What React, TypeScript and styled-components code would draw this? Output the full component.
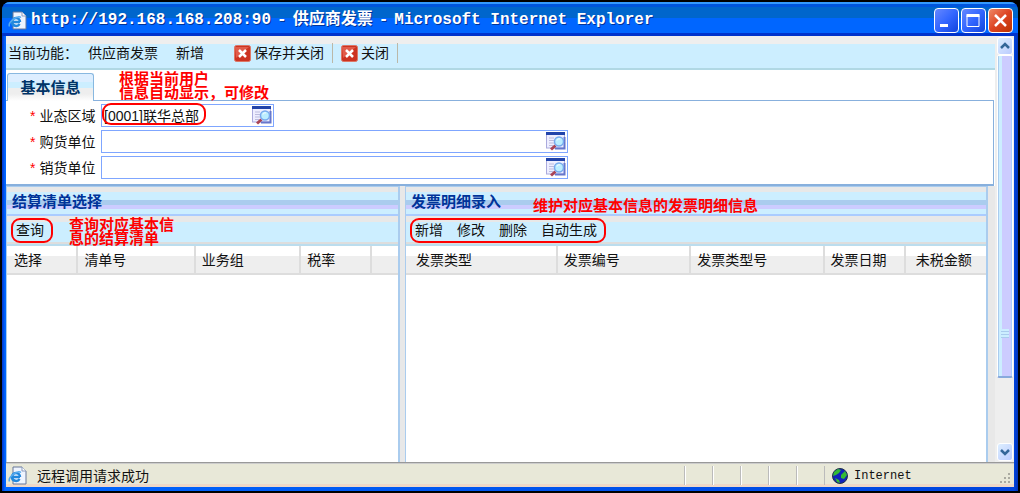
import React from "react";
import styled, { createGlobalStyle, css } from "styled-components";

const Global = createGlobalStyle`
  *, *::before, *::after { box-sizing: border-box; }
  html, body { margin: 0; background: #000; }
  body { font: 14px/20px "Liberation Sans", "Noto Sans CJK SC", sans-serif; color: #111; }
  button { font: inherit; color: inherit; border: 0; padding: 0; background: none; cursor: pointer; white-space: nowrap; }
`;

const Frame = styled.div`
  min-height: 100vh;
  display: flex;
  padding: 2px;
  background: #000;
`;

const Window = styled.div`
  flex: 1;
  min-width: 0;
  display: flex;
  flex-direction: column;
  padding: 0 4px 4px;
  border-radius: 8px 8px 0 0;
  background: linear-gradient(90deg, #0033cc 0, #0066ff 3px, #0066ff 4px, #0044dd calc(100% - 4px), #0033bb 100%);
`;

const TitleBar = styled.header`
  height: 34px;
  margin: 0 -4px;
  padding: 2px 5px 0 6px;
  display: flex;
  align-items: center;
  border-radius: 8px 8px 0 0;
  background: linear-gradient(#3399ff 0 2px, #0055dd 2px 5px, #0066cc 5px 16px, #0066ff 16px 31px, #0033cc 31px);
`;

const Title = styled.h1`
  flex: 1;
  min-width: 0;
  margin: 0 0 0 4px;
  display: flex;
  gap: 6px;
  white-space: nowrap;
  overflow: hidden;
  font: bold 16px/20px "Liberation Mono", "Noto Sans CJK SC", monospace;
  color: #fff;
  text-shadow: 1px 1px 0 #003399;
`;

const WindowButtons = styled.div`
  display: flex;
  gap: 2px;
`;

const WindowButton = styled.button<{ $close?: boolean }>`
  width: 25px;
  height: 25px;
  border: 1px solid #fff;
  border-radius: 4px;
  background: ${(p) => (p.$close ? "linear-gradient(135deg, #ee8866, #dd4422 50%, #bb3300)" : "linear-gradient(135deg, #6688ff, #3366ff 50%, #1144dd)")};
  svg { display: block; }
`;

const Client = styled.div`
  flex: 1;
  display: flex;
  background: #fff;
`;

const Page = styled.main`
  flex: 1;
  min-width: 0;
  display: flex;
  flex-direction: column;
`;

const Toolbar = styled.div`
  height: 34px;
  padding: 2px 2px 0;
  display: flex;
  align-items: center;
  background: linear-gradient(#eee 0 8px, #cef 8px);
  border-bottom: 2px solid #b0d8e4;
  white-space: nowrap;
`;

const Crumb = styled.span<{ $wide?: boolean }>`
  margin-right: ${(p) => (p.$wide ? 30 : 18)}px;
  &:first-child { margin-right: 10px; }
`;

const ToolButton = styled.button`
  display: flex;
  align-items: center;
  gap: 3px;
  height: 20px;
  padding-right: 8px;
  margin-right: 8px;
  border-right: 1px solid #bbb8a8;
`;

const TabBar = styled.div`
  position: relative;
  height: 30px;
  padding: 3px 0 0 1px;
  display: flex;
  align-items: stretch;
`;

const Tab = styled.button`
  position: relative;
  z-index: 1;
  width: 87px;
  margin-bottom: -1px;
  border: 1px solid #88b8e0;
  border-bottom: 0;
  border-radius: 3px 3px 0 0;
  background: linear-gradient(#def 0 8px, #cef 8px 14px, #eee 14px 20px, #fff);
  font-weight: bold;
  font-size: 15px;
  color: #003366;
`;

const BasicForm = styled.form`
  border: 1px solid #88b0dd;
  border-left: 0;
  border-bottom-width: 2px;
  padding: 3px 0 5px 24px;
  margin-right: 1px;
  display: flex;
  flex-direction: column;
  gap: 3px;
`;

const Field = styled.div<{ $short?: boolean }>`
  display: flex;
  align-items: center;
  label { width: 71px; white-space: nowrap; line-height: 22px; }
  label i { color: #f00; font-style: normal; margin-right: 4px; }
  > div {
    width: ${(p) => (p.$short ? 173 : 467)}px;
    height: 23px;
    padding: 0 1px 0 2px;
    display: flex;
    align-items: center;
    border: 1px solid #7fa6ff;
  }
  input { flex: 1; min-width: 0; border: 0; padding: 0; outline: 0; font: inherit; color: inherit; background: none; }
  svg { display: block; }
`;

const Panels = styled.div`
  flex: 1;
  display: grid;
  grid-template-columns: minmax(0, 394fr) minmax(0, 583fr);
  gap: 5px;
  padding-right: 7px;
  background: #e8e8e8;
`;

const Panel = styled.section`
  display: flex;
  flex-direction: column;
  background: #fff;
  border: 1px solid #aaccee;
  border-width: 1px 2px 0 1px;
`;

const PanelTitle = styled.h2`
  margin: 0;
  height: 29px;
  padding: 0 5px;
  font-size: 15px;
  line-height: 29px;
  color: #003399;
  background: linear-gradient(#e8e8e8 0 5px, #cef 5px 13px, #aaccee 13px 18px, #ccccff 18px 22px, #cef 22px);
  border-bottom: 2px solid #aaccff;
`;

const PanelTools = styled.div`
  height: 30px;
  padding: 0 9px 2px;
  display: flex;
  align-items: center;
  gap: 14px;
  background: linear-gradient(#e8e8e8 0 6px, #cef 6px 26px, #ddd 26px 28px, #bde 28px);
`;

const Grid = styled.table<{ $indent: number }>`
  width: 100%;
  table-layout: fixed;
  border-collapse: collapse;
  th {
    height: 28px;
    padding: 0 6px;
    text-align: left;
    font-weight: normal;
    white-space: nowrap;
    overflow: hidden;
    background: linear-gradient(#fff 0 10px, #eee 10px);
    border-right: 2px solid #ddd;
    border-bottom: 2px solid #ddd;
  }
  th:first-child, th:last-child { padding-left: ${(p) => p.$indent}px; }
  th:last-child { border-right: 0; }
`;

const ScrollTrack = styled.div`
  width: 19px;
  padding: 1px 1px 1px 2px;
  display: flex;
  flex-direction: column;
  background: #eee;
`;

const ScrollButton = styled.button`
  height: 18px;
  border: 1px solid #fff;
  border-radius: 3px;
  background: linear-gradient(135deg, #def, #bbccff);
  svg { display: block; margin: auto; }
`;

const ScrollThumb = styled.div`
  flex: 280;
  display: flex;
  flex-direction: column;
  justify-content: flex-end;
  align-items: center;
  padding-bottom: 38px;
  border: 1px solid #fff;
  border-bottom: 2px solid #88aadd;
  border-radius: 2px;
  background: linear-gradient(90deg, #aaccee 0 1px, #cceeff 1px 4px, #ccccff 4px 13px, #aaccff 13px);
  span { width: 8px; height: 9px; background: repeating-linear-gradient(#cef 0 2px, #aaccee 2px 3px); }
`;

const ScrollRest = styled.div`
  flex: 65;
`;

const StatusBar = styled.footer`
  height: 25px;
  padding: 2px 2px 0;
  display: flex;
  align-items: center;
  background: linear-gradient(#999 0 1px, #ccc 1px 2px, #e8e8d8 2px 22px, #eed8c8 22px);
`;

const StatusText = styled.span`
  flex: 1;
  margin-left: 10px;
`;

const StatusCell = styled.span`
  width: 28px;
  height: 19px;
  border-left: 1px solid #bbb;
  box-shadow: inset 1px 0 #fff;
`;

const Zone = styled.span`
  width: 188px;
  height: 19px;
  padding-left: 7px;
  display: flex;
  align-items: center;
  gap: 6px;
  border-left: 1px solid #bbb;
  font-family: "Liberation Mono", monospace;
  font-size: 12px;
  svg:last-child { margin-left: auto; align-self: flex-end; }
`;

const Anchor = styled.span`
  position: relative;
`;

const Note = styled.span<{ $x: number; $y: number }>`
  position: absolute;
  z-index: 3;
  left: ${(p) => p.$x}px;
  top: ${(p) => p.$y}px;
  font-weight: bold;
  font-size: 15px;
  line-height: 14px;
  color: #f00;
  white-space: nowrap;
  pointer-events: none;
`;

const ringed = css`
  position: relative;
  &::after {
    content: "";
    position: absolute;
    z-index: 2;
    border: 2px solid #f00;
    border-radius: 9px;
    pointer-events: none;
  }
`;

const RingedBox = styled.div`
  ${ringed}
  &::after { left: 0; top: -2px; width: 104px; height: 22px; }
`;

const RingedTools = styled.div`
  ${ringed}
  display: flex;
  gap: 14px;
  &::after { inset: -2px -9px -3px -5px; }
`;

const IePage = () => (
  <svg width="19" height="19" viewBox="0 0 19 19" aria-hidden="true">
    <path d="M5 1h9l4 4v13H5z" fill="#eef4ff" stroke="#667799" />
    <path d="M14 1v4h4" fill="#fff" stroke="#8899bb" />
    <path d="M12 11H4a4 4 0 0 1 8 0M4 11c0 4.500 6 5 7.500 2" fill="none" stroke="#2288dd" strokeWidth="2.500" />
    <path d="M1.500 15.500c-2-4 8-12 11.500-9" fill="none" stroke="#55aaee" strokeWidth="1.500" />
  </svg>
);

const CloseIcon = () => (
  <svg width="17" height="17" viewBox="0 0 17 17" aria-hidden="true">
    <rect x="0.500" y="0.500" width="16" height="16" rx="2" fill="#cc3322" stroke="#dd7766" />
    <path d="M1 2h14L2 13z" fill="#ee7766" opacity=".6" />
    <path d="M5 5l7 7M12 5l-7 7" stroke="#fff" strokeWidth="2.500" />
  </svg>
);

const LookupIcon = () => (
  <svg width="20" height="19" viewBox="0 0 20 19" aria-hidden="true">
    <rect x="0.500" y="1" width="18" height="15" fill="#eeeeff" stroke="#aaaadd" />
    <path d="M0 0h19v3H0z" fill="#2244aa" />
    <path d="M3 6h5M3 8.500h5M3 11h5M3 13.500h4" stroke="#bbbbdd" />
    <path d="M9.500 13.500l-4.500 4" stroke="#aa4455" strokeWidth="3" />
    <path d="M9 16.500h9.500V5" fill="none" stroke="#6677cc" strokeWidth="2" />
    <circle cx="13" cy="9.500" r="4.500" fill="#bbeeff" stroke="#77aaee" strokeWidth="1.500" />
    <path d="M11 8.500c.5-1.500 2-2 3-1.500" fill="none" stroke="#fff" />
  </svg>
);

const Globe = () => (
  <svg width="16" height="16" viewBox="0 0 16 16" aria-hidden="true">
    <circle cx="8" cy="8" r="7.500" fill="#1122bb" stroke="#223344" />
    <path d="M2 4l4-3 3 1-2 3-3 2-3 1zM9 7l4-4 2 4-3 4-3-1zM3 10l4 2 1 3-3-1z" fill="#33bb33" />
  </svg>
);

const Chevron = ({ down }: { down?: boolean }) => (
  <svg width="12" height="10" viewBox="0 0 12 10" aria-hidden="true">
    <path d={down ? "M2 3l4 4 4-4" : "M2 7l4-4 4 4"} fill="none" stroke="#336699" strokeWidth="2.500" />
  </svg>
);

const Grip = () => (
  <svg width="13" height="13" viewBox="0 0 13 13" aria-hidden="true">
    <path d="M9 1h2v2H9zM5 5h2v2H5zM9 5h2v2H9zM1 9h2v2H1zM5 9h2v2H5zM9 9h2v2H9z" fill="#aaaaa0" />
  </svg>
);

type Column = { label: string; width?: string };

const DataGrid = ({ columns, indent }: { columns: Column[]; indent: number }) => (
  <Grid $indent={indent}>
    <colgroup>{columns.map((c, i) => <col key={i} style={{ width: c.width }} />)}</colgroup>
    <thead>
      <tr>{columns.map((c, i) => <th key={i} scope="col">{c.label}</th>)}</tr>
    </thead>
    <tbody />
  </Grid>
);

const settlementColumns: Column[] = [
  { label: "选择", width: "18%" },
  { label: "清单号", width: "30%" },
  { label: "业务组", width: "27%" },
  { label: "税率", width: "18%" },
  { label: "" },
];

const invoiceColumns: Column[] = [
  { label: "发票类型", width: "26%" },
  { label: "发票编号", width: "23%" },
  { label: "发票类型号", width: "23%" },
  { label: "发票日期", width: "14%" },
  { label: "未税金额" },
];

const LookupField = ({ id, label, value = "", short }: { id: string; label: string; value?: string; short?: boolean }) => {
  const Box = value ? RingedBox : "div";
  return (
    <Field $short={short}>
      <label htmlFor={id}><i>*</i>{label}</label>
      <Box>
        <input id={id} defaultValue={value} />
        <button type="button" aria-label={label}><LookupIcon /></button>
      </Box>
    </Field>
  );
};

export default function App() {
  return (
    <Frame>
      <Global />
      <Window>
        <TitleBar>
          <IePage />
          <Title>
            <span>http://192.168.168.208:90</span><span>-</span><span>供应商发票</span><span>-</span>
            <span>Microsoft Internet Explorer</span>
          </Title>
          <WindowButtons>
            <WindowButton aria-label="Minimize">
              <svg width="23" height="23"><path d="M5 15h8v3H5z" fill="#fff" /></svg>
            </WindowButton>
            <WindowButton aria-label="Maximize">
              <svg width="23" height="23"><path d="M5 6.500h12v11H5z" fill="none" stroke="#fff" /><path d="M4.500 5h13v3h-13z" fill="#fff" /></svg>
            </WindowButton>
            <WindowButton $close aria-label="Close">
              <svg width="23" height="23"><path d="M6 6l11 11M17 6L6 17" stroke="#fff" strokeWidth="2.500" /></svg>
            </WindowButton>
          </WindowButtons>
        </TitleBar>
        <Client>
          <Page>
            <Toolbar>
              <Crumb>当前功能：</Crumb>
              <Crumb>供应商发票</Crumb>
              <Crumb $wide>新增</Crumb>
              <ToolButton><CloseIcon />保存并关闭</ToolButton>
              <ToolButton><CloseIcon />关闭</ToolButton>
            </Toolbar>
            <TabBar>
              <Tab>基本信息</Tab>
              <Note $x={113} $y={2}>根据当前用户<br />信息自动显示，可修改</Note>
            </TabBar>
            <BasicForm>
              <LookupField id="region" label="业态区域" value="[0001]联华总部" short />
              <LookupField id="buyer" label="购货单位" />
              <LookupField id="seller" label="销货单位" />
            </BasicForm>
            <Panels>
              <Panel>
                <PanelTitle>结算清单选择</PanelTitle>
                <PanelTools>
                  <RingedTools><button>查询</button></RingedTools>
                  <Anchor><Note $x={11} $y={-12}>查询对应基本信<br />息的结算清单</Note></Anchor>
                </PanelTools>
                <DataGrid columns={settlementColumns} indent={7} />
              </Panel>
              <Panel>
                <PanelTitle>
                  发票明细录入
                  <Anchor><Note $x={32} $y={6}>维护对应基本信息的发票明细信息</Note></Anchor>
                </PanelTitle>
                <PanelTools>
                  <RingedTools>
                    <button>新增</button><button>修改</button><button>删除</button><button>自动生成</button>
                  </RingedTools>
                </PanelTools>
                <DataGrid columns={invoiceColumns} indent={10} />
              </Panel>
            </Panels>
          </Page>
          <ScrollTrack>
            <ScrollButton aria-label="Scroll up"><Chevron /></ScrollButton>
            <ScrollThumb><span /></ScrollThumb>
            <ScrollRest />
            <ScrollButton aria-label="Scroll down"><Chevron down /></ScrollButton>
          </ScrollTrack>
        </Client>
        <StatusBar>
          <IePage />
          <StatusText>远程调用请求成功</StatusText>
          <StatusCell /><StatusCell /><StatusCell /><StatusCell /><StatusCell />
          <Zone><Globe />Internet<Grip /></Zone>
        </StatusBar>
      </Window>
    </Frame>
  );
}
